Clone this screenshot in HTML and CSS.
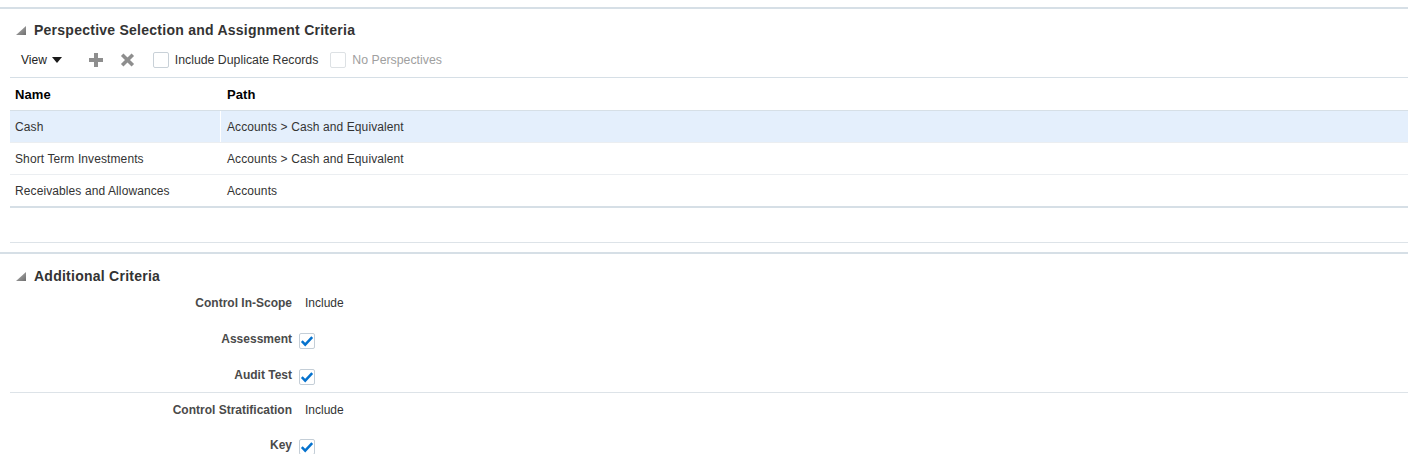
FILE: index.html
```html
<!DOCTYPE html>
<html>
<head>
<meta charset="utf-8">
<link rel="stylesheet" href="styles.css">
</head>
<body>
<section class="panel">
  <div class="panel-header">
    <svg class="disclose" width="10" height="9" viewBox="0 0 10 9"><defs><linearGradient id="g1" x1="0" y1="0" x2="1" y2="1"><stop offset="0" stop-color="#b5b5b5"/><stop offset="1" stop-color="#6e6e6e"/></linearGradient></defs><polygon points="10,0 10,9 0,9" fill="url(#g1)"/></svg>
    <h2 class="panel-title">Perspective Selection and Assignment Criteria</h2>
  </div>
  <div class="toolbar">
    <span class="view-btn">View</span>
    <svg class="view-caret" width="10" height="6" viewBox="0 0 10 6"><polygon points="0,0 10,0 5,6" fill="#1a1a1a"/></svg>
    <svg class="tool-add" width="14" height="14" viewBox="0 0 14 14"><path d="M5 0h4v5h5v4H9v5H5V9H0V5h5z" fill="#8e8e8e"/></svg>
    <svg class="tool-del" width="15" height="14" viewBox="0 0 15 14"><path d="M2.2 1.8 L12.8 12.2 M12.8 1.8 L2.2 12.2" stroke="#8e8e8e" stroke-width="3.6"/></svg>
    <span class="cb"></span><span class="cb-label">Include Duplicate Records</span>
    <span class="cb cb-disabled"></span><span class="cb-label disabled">No Perspectives</span>
  </div>
  <div class="table">
    <div class="trow thead">
      <div class="cell c1">Name</div>
      <div class="cell c2">Path</div>
    </div>
    <div class="trow selected">
      <div class="cell c1">Cash</div>
      <div class="cell c2">Accounts &gt; Cash and Equivalent</div>
    </div>
    <div class="trow">
      <div class="cell c1">Short Term Investments</div>
      <div class="cell c2">Accounts &gt; Cash and Equivalent</div>
    </div>
    <div class="trow last">
      <div class="cell c1">Receivables and Allowances</div>
      <div class="cell c2">Accounts</div>
    </div>
    <div class="tfoot"></div>
  </div>
</section>
<section class="panel panel-second">
  <div class="panel-header">
    <svg class="disclose" width="10" height="9" viewBox="0 0 10 9"><defs><linearGradient id="g2" x1="0" y1="0" x2="1" y2="1"><stop offset="0" stop-color="#b5b5b5"/><stop offset="1" stop-color="#6e6e6e"/></linearGradient></defs><polygon points="10,0 10,9 0,9" fill="url(#g2)"/></svg>
    <h2 class="panel-title">Additional Criteria</h2>
  </div>
  <div class="form">
    <div class="form-group group-one">
      <div class="form-row"><span class="flabel">Control In-Scope</span><span class="fvalue">Include</span></div>
      <div class="form-row"><span class="flabel">Assessment</span><span class="check"><svg width="14" height="14" viewBox="0 0 14 14"><path d="M1.8 7.2 L5.2 10.6 L12.2 3.2" fill="none" stroke="#0572ce" stroke-width="2.5"/></svg></span></div>
      <div class="form-row row-end"><span class="flabel">Audit Test</span><span class="check"><svg width="14" height="14" viewBox="0 0 14 14"><path d="M1.8 7.2 L5.2 10.6 L12.2 3.2" fill="none" stroke="#0572ce" stroke-width="2.5"/></svg></span></div>
    </div>
    <div class="form-group group-two">
      <div class="form-row row-start"><span class="flabel">Control Stratification</span><span class="fvalue">Include</span></div>
      <div class="form-row"><span class="flabel">Key</span><span class="check"><svg width="14" height="14" viewBox="0 0 14 14"><path d="M1.8 7.2 L5.2 10.6 L12.2 3.2" fill="none" stroke="#0572ce" stroke-width="2.5"/></svg></span></div>
    </div>
  </div>
</section>
</body>
</html>
```
FILE: styles.css
```css
html, body {
  margin: 0;
  background: #fff;
}
body {
  padding-top: 7px;
  font-family: "Liberation Sans", Arial, sans-serif;
  font-size: 12px;
  color: #333;
  overflow: hidden;
}
.panel {
  border-top: 2px solid #d6dfe6;
}
.panel-second {
  margin-top: 9px;
}
.panel-header {
  display: flex;
  align-items: center;
  height: 22px;
  margin-top: 10px;
  padding-left: 16px;
}
.panel-second .panel-header {
  margin-top: 11px;
}
.disclose {
  display: block;
  margin-right: 8px;
  margin-top: 0;
}
.panel-title {
  margin: 0;
  font-size: 14px;
  letter-spacing: 0.25px;
  font-weight: bold;
  color: #333;
  line-height: 22px;
}
.toolbar {
  display: flex;
  align-items: center;
  height: 36px;
  padding-left: 21px;
  padding-top: 1px;
  box-sizing: border-box;
}
.view-btn {
  color: #222;
}
.view-caret {
  display: block;
  margin-left: 5px;
  margin-top: 1px;
}
.tool-add {
  display: block;
  margin-left: 27px;
}
.tool-del {
  display: block;
  margin-left: 17px;
}
.cb {
  display: block;
  width: 16px;
  height: 16px;
  box-sizing: border-box;
  border: 1px solid #c9d1d8;
  border-radius: 2px;
  background: #fff;
  margin-left: 18px;
}
.cb-label {
  margin-left: 6px;
  color: #333;
  font-size: 12.3px;
}
.cb-disabled {
  border-color: #dde1e4;
  margin-left: 12px;
}
.cb-label.disabled {
  color: #a0a0a0;
}
.table {
  margin-left: 10px;
  border-top: 1px solid #d6dfe6;
}
.trow {
  display: flex;
  height: 32px;
  box-sizing: border-box;
  border-bottom: 1px solid #ebeef1;
  letter-spacing: 0.1px;
}
.thead {
  height: 33px;
  border-bottom-color: #d6dfe6;
  font-weight: bold;
  font-size: 13px;
  color: #000;
}
.trow.last {
  height: 33px;
  border-bottom: 2px solid #d6dfe6;
}
.selected {
  background: #e4effc;
}
.cell {
  display: flex;
  align-items: center;
  box-sizing: border-box;
}
.c1 {
  width: 211px;
  padding-left: 5px;
  border-right: 1px solid #fff;
}
.c2 {
  padding-left: 6px;
}
.tfoot {
  height: 35px;
  box-sizing: border-box;
  border-bottom: 1px solid #dde3e8;
}
.form {
  margin-top: -2px;
}
.form-group {
  margin-left: 10px;
}
.group-one {
  border-bottom: 1px solid #dde3e8;
}
.form-row {
  display: flex;
  align-items: center;
  height: 36px;
}
.row-end {
  height: 35px;
}
.row-start {
  height: 34px;
}
.flabel {
  width: 282px;
  text-align: right;
  font-weight: bold;
  color: #4a4a4a;
}
.fvalue {
  margin-left: 13px;
  color: #333;
}
.check {
  display: flex;
  align-items: center;
  justify-content: center;
  width: 16px;
  height: 16px;
  box-sizing: border-box;
  border: 1px solid #c4ced7;
  border-radius: 2px;
  background: #fff;
  margin-left: 7px;
  margin-top: 4px;
}
.check svg {
  display: block;
}
```
